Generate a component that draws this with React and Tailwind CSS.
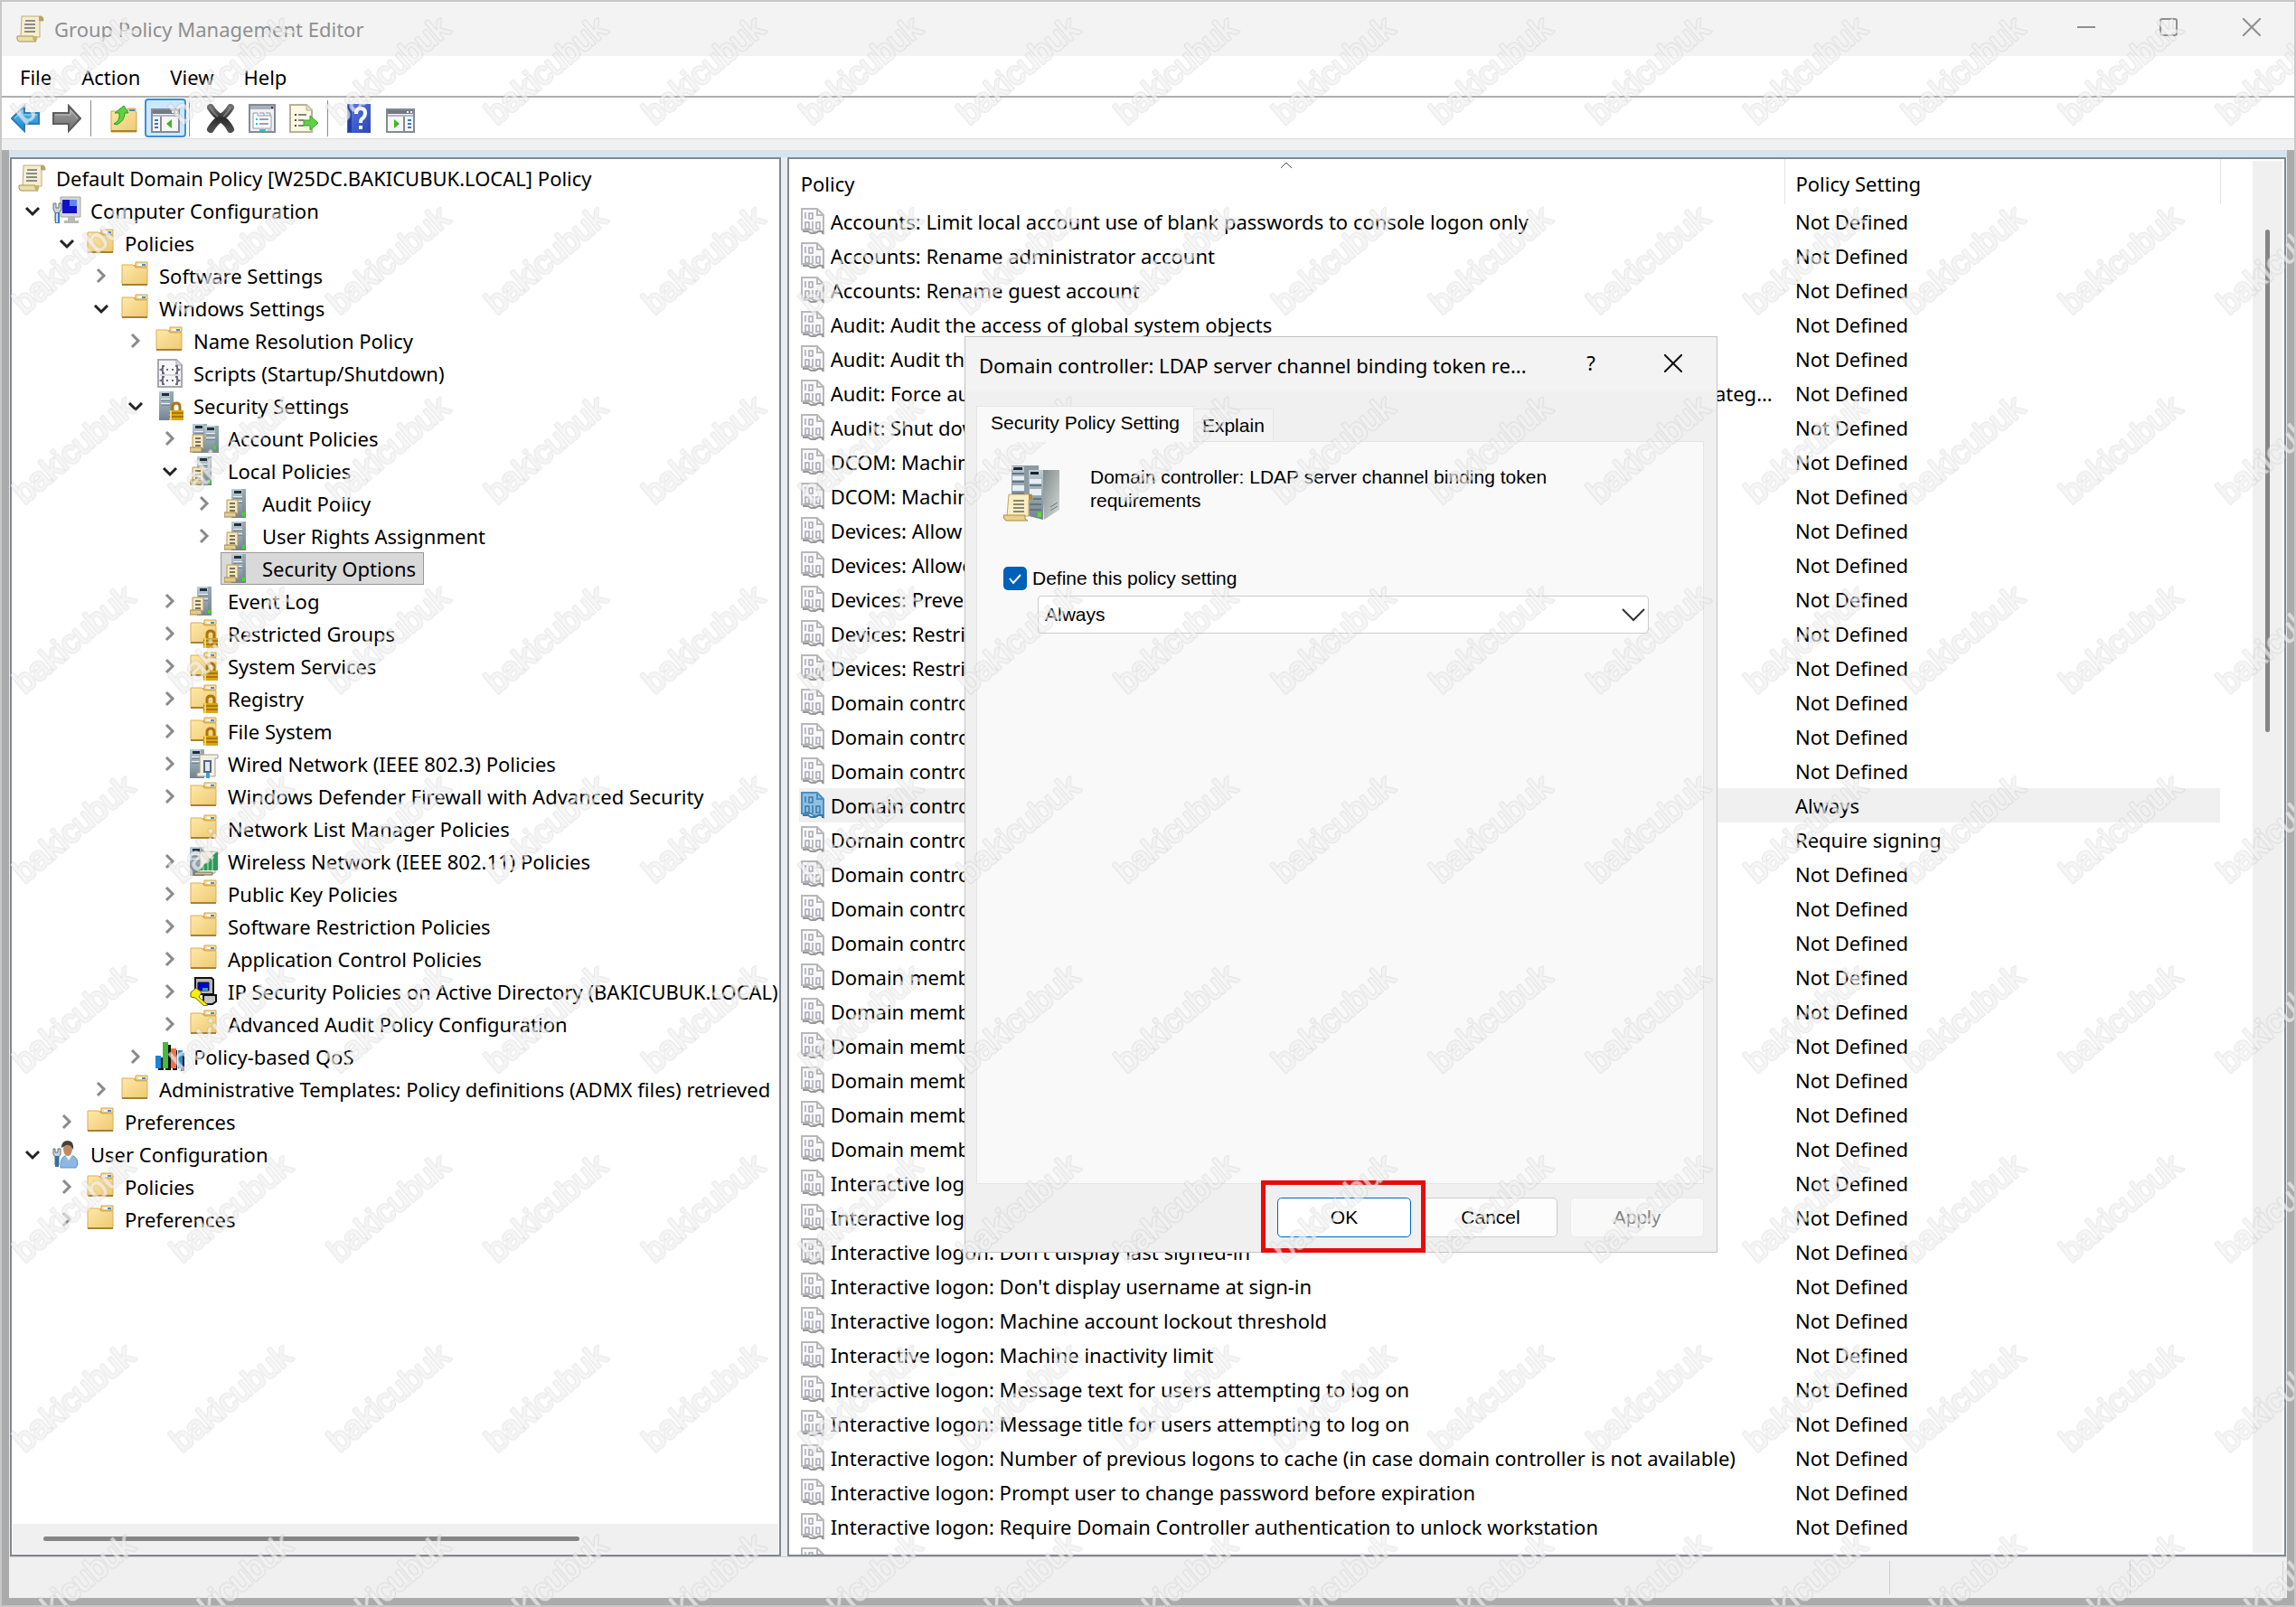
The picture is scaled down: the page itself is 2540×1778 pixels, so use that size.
const tree = [
    { level: 0, icon: 'scroll', label: 'Default Domain Policy [W25DC.BAKICUBUK.LOCAL] Policy' },
    { level: 1, icon: 'computer', label: 'Computer Configuration', state: 'open' },
    { level: 2, icon: 'folder', label: 'Policies', state: 'open' },
    { level: 3, icon: 'folder', label: 'Software Settings', state: 'closed' },
    { level: 3, icon: 'folder', label: 'Windows Settings', state: 'open' },
    { level: 4, icon: 'folder', label: 'Name Resolution Policy', state: 'closed' },
    { level: 4, icon: 'script', label: 'Scripts (Startup/Shutdown)' },
    { level: 4, icon: 'serverLock', label: 'Security Settings', state: 'open' },
    { level: 5, icon: 'servers', label: 'Account Policies', state: 'closed' },
    { level: 5, icon: 'server', label: 'Local Policies', state: 'open' },
    { level: 6, icon: 'server', label: 'Audit Policy', state: 'closed' },
    { level: 6, icon: 'server', label: 'User Rights Assignment', state: 'closed' },
    { level: 6, icon: 'server', label: 'Security Options', selected: true },
    { level: 5, icon: 'server', label: 'Event Log', state: 'closed' },
    { level: 5, icon: 'folderLock', label: 'Restricted Groups', state: 'closed' },
    { level: 5, icon: 'folderLock', label: 'System Services', state: 'closed' },
    { level: 5, icon: 'folderLock', label: 'Registry', state: 'closed' },
    { level: 5, icon: 'folderLock', label: 'File System', state: 'closed' },
    { level: 5, icon: 'wired', label: 'Wired Network (IEEE 802.3) Policies', state: 'closed' },
    { level: 5, icon: 'folder', label: 'Windows Defender Firewall with Advanced Security', state: 'closed' },
    { level: 5, icon: 'folder', label: 'Network List Manager Policies' },
    { level: 5, icon: 'wireless', label: 'Wireless Network (IEEE 802.11) Policies', state: 'closed' },
    { level: 5, icon: 'folder', label: 'Public Key Policies', state: 'closed' },
    { level: 5, icon: 'folder', label: 'Software Restriction Policies', state: 'closed' },
    { level: 5, icon: 'folder', label: 'Application Control Policies', state: 'closed' },
    { level: 5, icon: 'ipsec', label: 'IP Security Policies on Active Directory (BAKICUBUK.LOCAL)', state: 'closed' },
    { level: 5, icon: 'folder', label: 'Advanced Audit Policy Configuration', state: 'closed' },
    { level: 4, icon: 'qos', label: 'Policy-based QoS', state: 'closed' },
    { level: 3, icon: 'folder', label: 'Administrative Templates: Policy definitions (ADMX files) retrieved', state: 'closed' },
    { level: 2, icon: 'folder', label: 'Preferences', state: 'closed' },
    { level: 1, icon: 'user', label: 'User Configuration', state: 'open' },
    { level: 2, icon: 'folder', label: 'Policies', state: 'closed' },
    { level: 2, icon: 'folder', label: 'Preferences', state: 'closed' },
];

const policies = [
    ['Accounts: Limit local account use of blank passwords to console logon only'],
    ['Accounts: Rename administrator account'],
    ['Accounts: Rename guest account'],
    ['Audit: Audit the access of global system objects'],
    ['Audit: Audit the use of Backup and Restore privilege'],
    ['Audit: Force audit policy subcategory settings (Windows Vista or later) to override audit policy category settings'],
    ['Audit: Shut down system immediately if unable to log security audits'],
    ['DCOM: Machine Access Restrictions in Security Descriptor Definition Language'],
    ['DCOM: Machine Launch Restrictions in Security Descriptor Definition Language'],
    ['Devices: Allow undock without having to log on'],
    ['Devices: Allowed to format and eject removable media'],
    ['Devices: Prevent users from installing printer drivers'],
    ['Devices: Restrict CD-ROM access to locally logged-on user only'],
    ['Devices: Restrict floppy access to locally logged-on user only'],
    ['Domain controller: Allow computer account re-use during domain join'],
    ['Domain controller: Allow server operators to schedule tasks'],
    ['Domain controller: Allow vulnerable Netlogon secure channel connections'],
    ['Domain controller: LDAP server channel binding token requirements', 'Always'],
    ['Domain controller: LDAP server signing requirements', 'Require signing'],
    ['Domain controller: LDAP server signing requirements Enforcement'],
    ['Domain controller: Refuse machine account password changes'],
    ['Domain controller: Refuse setting default machine account password'],
    ['Domain member: Digitally encrypt or sign secure channel data (always)'],
    ['Domain member: Digitally encrypt secure channel data (when possible)'],
    ['Domain member: Digitally sign secure channel data (when possible)'],
    ['Domain member: Disable machine account password changes'],
    ['Domain member: Maximum machine account password age'],
    ['Domain member: Require strong session key'],
    ['Interactive logon: Display user information when the session is locked'],
    ['Interactive logon: Do not require CTRL+ALT+DEL'],
    ["Interactive logon: Don't display last signed-in"],
    ["Interactive logon: Don't display username at sign-in"],
    ['Interactive logon: Machine account lockout threshold'],
    ['Interactive logon: Machine inactivity limit'],
    ['Interactive logon: Message text for users attempting to log on'],
    ['Interactive logon: Message title for users attempting to log on'],
    ['Interactive logon: Number of previous logons to cache (in case domain controller is not available)'],
    ['Interactive logon: Prompt user to change password before expiration'],
    ['Interactive logon: Require Domain Controller authentication to unlock workstation'],
    ['Interactive logon: Require smart card'],
];

function Svg({ children, className = 'w-8 h-8' }) {
    return (
        <svg viewBox="0 0 32 32" className={`${className} shrink-0`} aria-hidden="true">
            {children}
        </svg>
    );
}

function Scroll() {
    return (
        <>
            <path d="M6 2h22q2 1 2 5h-4v18H5z" fill="#f6eecb" stroke="#b9ad82" />
            <path d="M25 2h3q3 2 2 5h-5z" fill="#b5a468" />
            <path d="M1 24h18v3q0 3 3 3H4q-3 0-3-3z" fill="#ecdfa6" stroke="#a39561" />
            <path d="M19 24h4q1 3-1 6h-3z" fill="#c6b36d" />
            <path d="M10 7h11M9 11h12M9 15h12M9 19h12" stroke="#8c8a93" strokeWidth="2" />
        </>
    );
}

function FolderShape() {
    return (
        <>
            <path d="M1 4h14l3-3h11v7H1z" fill="#e3b75d" />
            <path d="M16 1h13v5H16z" fill="#f7e3a6" stroke="#d1a24a" />
            <path d="M19 3h4v2h-4z" fill="#fff" />
            <path d="M23 3h4v2h-4z" fill="#3f8fe0" />
            <path d="M1 4h12l3 3h13v19H1z" fill="url(#folderFill)" stroke="#d9ae55" />
            <path d="M1 26h28" stroke="#a98036" strokeWidth="2" />
        </>
    );
}

function Lock() {
    return (
        <>
            <path d="M19 22v-5q0-4 4-4t4 4v5" fill="none" stroke="#a9750e" strokeWidth="3" />
            <rect x="15" y="21" width="16" height="11" fill="#dca516" />
            <path d="M15 24h16M15 28h16" stroke="#a9750e" strokeWidth="2" />
            <path d="M17 21v11" stroke="#f7d566" strokeWidth="2" />
        </>
    );
}

function Tower({ x = 0, y = 0 }) {
    return (
        <g transform={`translate(${x} ${y})`}>
            <path d="M0 0h16v32H0z" fill="url(#towerFill)" />
            <path d="M12 0h4v32h-4z" fill="#738591" opacity=".45" />
            <path d="M3 2h8v3H3z" fill="#1f2f3b" />
            <path d="M2 8h10v2H2zM2 13h10v2H2z" fill="#e9f2f7" />
            <path d="M2 10h10M2 15h10" stroke="#52636f" />
        </g>
    );
}

function MiniScroll() {
    return (
        <>
            <path d="M3 12h12v15H3z" fill="#f6e8bd" stroke="#b39b5e" />
            <path d="M0 26h13v5H0z" fill="#e3cd8b" stroke="#9c8650" />
            <path d="M6 16h6M6 20h6M6 24h6" stroke="#77715f" strokeWidth="2" />
        </>
    );
}

const icons = {
    scroll: <Scroll />,
    folder: <FolderShape />,
    folderLock: (
        <>
            <FolderShape />
            <Lock />
        </>
    ),
    script: (
        <>
            <path d="M3 1h20l6 6v24H3z" fill="#f7f7f9" stroke="#a7a7ad" strokeWidth="2" />
            <path d="M23 1v6h6" fill="#d9d9de" stroke="#a7a7ad" />
            <path d="M10 8H8v3l-2 1 2 1v3h2M22 8h2v3l2 1-2 1v3h-2M12 12h2M18 12h2M10 20H8v3l-2 1 2 1v3h2M22 20h2v3l2 1-2 1v3h-2M12 24h2M18 24h2" fill="none" stroke="#6a6780" strokeWidth="2" />
            <path d="M5 18h22" stroke="#b9b9c1" />
        </>
    ),
    server: (
        <>
            <Tower x={8} />
            <MiniScroll />
            <path d="M20 26h3v4h-3z" fill="#3be012" />
        </>
    ),
    servers: (
        <>
            <Tower x={3} />
            <Tower x={16} y={2} />
            <MiniScroll />
            <path d="M26 24h3v4h-3z" fill="#3be012" />
        </>
    ),
    serverLock: (
        <>
            <Tower x={4} />
            <Lock />
        </>
    ),
    wired: (
        <>
            <Tower />
            <path d="M11 6h20v4h-3v20H8v-4h3z" fill="#f3efe2" stroke="#a79f88" />
            <path d="M16 13h7v12h-7z" fill="#dfe7f5" stroke="#53668b" strokeWidth="2" />
            <path d="M18 26h4v6h-4z" fill="#3aa4c9" />
        </>
    ),
    wireless: (
        <>
            <Tower />
            <path d="M11 5h20v4h-3v20H8v-3h3z" fill="#f3efe2" stroke="#a79f88" />
            <path d="M31 4v22H9z" fill="#2c9a57" />
            <path d="M15 21v5M20 16v10M25 11v15" stroke="#c9ecd4" />
            <path d="M5 28h20v3H5z" fill="#d3c79c" stroke="#6c6553" />
        </>
    ),
    computer: (
        <>
            <path d="M9 1h22v22H9z" fill="#d5d5d2" stroke="#a5a5a2" />
            <path d="M11 4h16v15H11z" fill="#1010c8" />
            <path d="M19 4h8v7h-8z" fill="#5d86f4" />
            <path d="M17 23h8v4h4v3H13v-3h4z" fill="#b9bab8" />
            <path d="M1 8h3v5h3V8h3v7l-3 3v10H3V18l-2-3z" fill="#c9d3da" stroke="#63717b" />
            <path d="M3 18h5v12H3z" fill="#2f7fbd" />
            <path d="M5 19v10" stroke="#c8e6fa" strokeWidth="2" />
        </>
    ),
    user: (
        <>
            <path d="M9 31q-1-14 9-14t10 10l-2 4z" fill="#8db8e6" stroke="#5f8fc4" />
            <path d="M14 17l4 6 4-6z" fill="#f4f8fc" />
            <ellipse cx="17" cy="10" rx="5" ry="8" fill="#c08a61" />
            <path d="M10 9q0-8 7-8t6 10q-3-6-8-5z" fill="#45403b" />
            <path d="M1 10h2v4h3v-4h3v6l-2 3v9H3v-9l-2-3z" fill="#c9d3da" stroke="#63717b" />
            <path d="M3 18h4v12H3z" fill="#2f6fad" />
        </>
    ),
    ipsec: (
        <>
            <path d="M6 1h18l2 2v16H6z" fill="#b9b9b9" stroke="#111" strokeWidth="2" />
            <path d="M9 6h12v9H9z" fill="#0000d8" stroke="#111" />
            <path d="M14 12h6v3h-6z" fill="#2aa3c4" />
            <path d="M15 20h14v7l-4 3H15z" fill="#c4c4c4" stroke="#111" strokeWidth="2" />
            <path d="M1 17l6-5 6 5-3 5 10 9-4 1-10-9-5-1z" fill="#f7ee05" stroke="#6b6700" />
        </>
    ),
    qos: (
        <>
            <path d="M3 17h6v14H3zM11 3h6v28h-6zM19 9h5v22h-5zM28 12h4v20h-4z" fill="#111" />
            <path d="M0 15h6v14H0z" fill="#1785d6" />
            <path d="M8 0h6v29H8z" fill="#48b83c" />
            <path d="M17 7h6v22h-6z" fill="#ef7146" />
            <path d="M25 9h5v20h-5z" fill="#2a8bd0" />
        </>
    ),
    back: (
        <>
            <path d="M1 16L15 2v8h16v12H15v8z" fill="url(#blueArrow)" stroke="#2c7db5" strokeWidth="2" />
            <path d="M4 16l9-9v5h16" fill="none" stroke="#9edcfb" />
        </>
    ),
    forward: (
        <>
            <path d="M31 16L18 2v8H1v12h17v8z" fill="url(#grayArrow)" stroke="#5c5c5c" strokeWidth="2" />
            <path d="M3 12h17V7l8 9" fill="none" stroke="#c2c2c2" />
        </>
    ),
    up: (
        <>
            <path d="M2 8h18V5h9v4h1v22H2z" fill="url(#folderFill)" stroke="#d0a34a" />
            <path d="M22 6h6v2h-6z" fill="#3f8fe0" />
            <path d="M2 30h28" stroke="#a98036" strokeWidth="2" />
            <path d="M5 22q7-3 6-12H6l10-8 5 8h-4q0 9-9 13z" fill="#5bd33c" stroke="#2b9b1e" />
        </>
    ),
    panes: (
        <>
            <path d="M1 6h30v25H1z" fill="#f5f6f8" stroke="#858a93" strokeWidth="2" />
            <path d="M2 7h28v4H2z" fill="#737985" />
            <path d="M23 8h2v2h-2zM27 8h2v2h-2z" fill="#fff" />
            <path d="M2 13h28" stroke="#b3b7bf" strokeWidth="2" />
            <path d="M11 14v16" stroke="#858a93" strokeWidth="2" />
            <path d="M4 18h4M4 22h4M4 26h4" stroke="#3a76c8" strokeWidth="2" />
            <path d="M17 22l6-5v10z" fill="#41b51d" />
        </>
    ),
    panesRight: (
        <>
            <path d="M1 6h30v25H1z" fill="#f5f6f8" stroke="#858a93" strokeWidth="2" />
            <path d="M2 7h28v4H2z" fill="#737985" />
            <path d="M23 8h2v2h-2zM27 8h2v2h-2z" fill="#fff" />
            <path d="M2 13h28" stroke="#b3b7bf" strokeWidth="2" />
            <path d="M20 14v16" stroke="#858a93" strokeWidth="2" />
            <path d="M24 18h4M24 22h4M24 26h4" stroke="#3a76c8" strokeWidth="2" />
            <path d="M15 22l-6-5v10z" fill="#41b51d" />
        </>
    ),
    remove: (
        <>
            <path d="M5 4q5 8 11 11 6-3 11-11M5 28q5-8 11-12 7 4 11 12" fill="none" stroke="url(#crossFill)" strokeWidth="8" strokeLinecap="round" />
            <path d="M4 3q4 7 9 11M27 3q-3 7-8 11" fill="none" stroke="#9b9b9b" strokeWidth="2" opacity=".6" />
        </>
    ),
    properties: (
        <>
            <path d="M2 1h28v30H2z" fill="#f1f2f5" stroke="#858a99" strokeWidth="2" />
            <path d="M3 2h26v4H3z" fill="#aab0bb" />
            <path d="M26 3h2v2h-2z" fill="#333" />
            <path d="M6 10h5v3h15v14H6z" fill="#fff" stroke="#9298a6" />
            <path d="M13 10h5v3M20 10h5v3" fill="none" stroke="#9298a6" />
            <path d="M9 17h2M9 22h2" stroke="#19c4ea" strokeWidth="2" />
            <path d="M13 17h10M13 22h10" stroke="#9aa0ad" strokeWidth="2" />
            <path d="M13 28h7v2h-7z" fill="#19c8ee" />
            <path d="M22 28h5v2h-5z" fill="#c9ccd4" />
        </>
    ),
    exportList: (
        <>
            <path d="M1 1h18l6 6v24H1z" fill="#fcf8e4" stroke="#b7b195" strokeWidth="2" />
            <path d="M19 1v6h6" fill="#e7dfbd" stroke="#b7b195" />
            <path d="M6 12h2M6 18h2M6 24h2" stroke="#4b4b55" strokeWidth="2" />
            <path d="M10 12h9M10 18h6M10 24h6" stroke="#86868c" strokeWidth="2" />
            <path d="M16 18h7v-5l9 8-9 8v-5h-7z" fill="#62cf4a" stroke="#36a327" />
        </>
    ),
    help: (
        <>
            <path d="M3 0h26v32H3z" fill="url(#helpFill)" />
            <path d="M4 1h4v30H4z" fill="#1f3da1" />
            <path d="M13 11q0-6 5-6t5 5q0 4-3 6-2 1-2 5" fill="none" stroke="#fff" strokeWidth="4" />
            <path d="M16 24h4v4h-4z" fill="#fff" />
        </>
    ),
};

function PolicyIcon({ selected }) {
    const ink = selected ? '#3c79a8' : '#a6a6b6';
    const edge = selected ? '#4c8fbf' : '#b8b8b8';
    return (
        <svg viewBox="0 0 26 30" className="w-[26px] h-[30px] shrink-0" aria-hidden="true">
            <path d="M1 1h17l7 7v20l-4-3-3 2-4-1-3-2H1z" fill={selected ? '#8fc0e2' : '#f8f8fa'} stroke={edge} strokeWidth="2" />
            <path d="M18 1v7h7" fill="none" stroke={edge} strokeWidth="2" />
            <path d="M5 5v7M9 6h4v6H9zM5 16h4v7H5zM13 15v9M17 16h4v7h-4z" fill="none" stroke={ink} strokeWidth="1.5" />
            <path d="M2 26h6l3 2h5l3-2h5v3" fill="none" stroke={selected ? '#3c79a8' : '#999999'} strokeWidth="2" />
        </svg>
    );
}

function ServerBig() {
    return (
        <svg viewBox="0 0 62 62" className="w-[62px] h-[62px] shrink-0" aria-hidden="true">
            <path d="M9 0h30v48H9z" fill="#8d9aa2" />
            <path d="M10 1h13v44H10z" fill="url(#towerFill)" />
            <path d="M11 2h10v3H11z" fill="#17242c" />
            <path d="M10 12h13v4H10zM10 22h13v6H10z" fill="#e6f0f4" />
            <path d="M10 9h13M10 18h13M10 31h13" stroke="#65747e" strokeWidth="2" />
            <path d="M42 5h20v44L45 60z" fill="url(#sideFill)" />
            <path d="M28 5h16v55l-16-4z" fill="url(#towerFill)" />
            <path d="M30 7h9v3h-9z" fill="#17242c" />
            <path d="M29 15h13v5H29zM29 26h13v7H29z" fill="#e6f0f4" />
            <path d="M29 22h13M29 37h13M29 43h13M29 49h13" stroke="#65747e" strokeWidth="2" />
            <path d="M38 52h4v5h-4z" fill="#55e01c" />
            <path d="M52 46l8-5M52 50l8-5" stroke="#6b7477" />
            <path d="M6 32h25q2 2 1 6h-4v18H4z" fill="#fbeec2" stroke="#c0a76a" />
            <path d="M28 32h3q2 2 1 6h-4z" fill="#a98c3f" />
            <path d="M0 55h24v4l3 2H3q-3-1-3-6z" fill="#ecd08a" stroke="#a88b4b" />
            <path d="M11 39h12M11 43h12M11 47h12M11 51h12" stroke="#8a8577" strokeWidth="2" />
        </svg>
    );
}

function Chevron({ state }) {
    if (!state) return <span className="w-[38px] shrink-0" />;
    return (
        <button className="w-[38px] h-9 pl-[2px] shrink-0 flex items-center justify-center" aria-label={state === 'open' ? 'Collapse' : 'Expand'}>
            <svg viewBox="0 0 20 20" className="w-5 h-5" fill="none" strokeWidth="3" aria-hidden="true">
                {state === 'open' ? <path d="M3 7l7 7 7-7" stroke="#222" /> : <path d="M6 3l7 7-7 7" stroke="#8a8a8a" />}
            </svg>
        </button>
    );
}

function ToolButton({ icon, label, active }) {
    return (
        <button
            aria-label={label}
            className={`w-[46px] h-[43px] flex items-center justify-center ${active ? 'bg-[#cce8ff] border-2 border-[#3d8fd1] rounded' : ''}`}
        >
            <Svg>{icons[icon]}</Svg>
        </button>
    );
}

function Separator() {
    return <span className="w-px h-10 bg-[#8d8d8d] shrink-0" />;
}

function TreePane() {
    return (
        <nav className="min-w-0 bg-white border-2 border-[#828790] flex flex-col overflow-hidden">
            <ul className="flex-1 pt-[3px] pl-[3px] overflow-hidden">
                {tree.map((node, i) => (
                    <li key={i} className="h-9 flex items-center whitespace-nowrap" style={{ paddingLeft: Math.max(0, node.level - 1) * 38 }}>
                        {node.level > 0 && <Chevron state={node.state} />}
                        <button
                            className={`h-9 flex items-center gap-[10px] pr-2 ${node.selected ? 'bg-[#d9d9d9] border border-[#999999] pl-[3px]' : 'pl-1'}`}
                        >
                            <Svg>{icons[node.icon]}</Svg>
                            {node.label}
                        </button>
                    </li>
                ))}
            </ul>
            <div className="h-[33px] m-px bg-[#f0f0f0] flex items-center pl-[34px]">
                <div className="w-[73%] h-[5px] rounded-full bg-[#858585]" />
            </div>
        </nav>
    );
}

function PolicyPane() {
    return (
        <section className="min-w-0 bg-white border-2 border-[#828790] flex overflow-hidden">
            <div className="flex-1 min-w-0 overflow-hidden">
                <table className="w-full table-fixed border-collapse text-left">
                    <colgroup>
                        <col />
                        <col className="w-[482px]" />
                        <col className="w-[36px]" />
                    </colgroup>
                    <thead>
                        <tr className="h-[50px]">
                            <th className="relative font-normal pl-[13px] pt-1 border-r border-[#e5e5e5]">
                                <svg viewBox="0 0 14 8" className="absolute left-1/2 top-[3px] -translate-x-1/2 w-[14px] h-2" fill="none" stroke="#555" aria-hidden="true">
                                    <path d="M1 7l6-6 6 6" />
                                </svg>
                                Policy
                            </th>
                            <th className="font-normal pl-3 pt-1 border-r border-[#e5e5e5]">Policy Setting</th>
                            <th />
                        </tr>
                    </thead>
                    <tbody>
                        {policies.map(([name, setting], i) => {
                            const selected = setting === 'Always';
                            return (
                                <tr key={i} className="h-[38px]">
                                    <td className="p-0">
                                        <div className={`ml-[11px] h-[38px] pl-[2px] pr-[10px] flex items-center gap-[7px] ${selected ? 'bg-[#f0f0f0]' : ''}`}>
                                            <PolicyIcon selected={selected} />
                                            <span className="truncate">{name}</span>
                                        </div>
                                    </td>
                                    <td className={`p-0 pl-3 ${selected ? 'bg-[#f0f0f0]' : ''}`}>{setting || 'Not Defined'}</td>
                                    <td />
                                </tr>
                            );
                        })}
                    </tbody>
                </table>
            </div>
            <div className="w-[33px] my-[2px] mr-[2px] bg-[#f0f0f0] flex justify-center pt-[76px]">
                <div className="w-[5px] h-[38%] rounded-full bg-[#858585]" />
            </div>
        </section>
    );
}

function PolicyDialog() {
    return (
        <div
            role="dialog"
            aria-labelledby="dialog-title"
            className="absolute left-[1065px] top-[370px] w-[833px] h-[1014px] bg-[#f0f0f0] border border-[#c3c3c3] flex flex-col"
        >
            <div className="h-[60px] bg-[#f3f3f3] flex items-center pl-[15px]">
                <h2 id="dialog-title" className="flex-1 whitespace-nowrap pt-[2px]">
                    Domain controller: LDAP server channel binding token re...
                </h2>
                <button className="w-[86px] h-full pb-1" aria-label="Help">?</button>
                <button className="w-24 h-full pb-[2px] flex items-center justify-center" aria-label="Close">
                    <svg viewBox="0 0 20 20" className="w-5 h-5" stroke="#111" strokeWidth="2" aria-hidden="true">
                        <path d="M0 0l20 20M20 0L0 20" />
                    </svg>
                </button>
            </div>
            <div className="flex-1 flex flex-col pl-3 pr-[14px] pt-4 pb-4 font-['Liberation_Sans',sans-serif] text-[21px] leading-[26px]">
                <div role="tablist" className="flex items-end">
                    <button role="tab" aria-selected="true" className="h-10 px-[15px] pb-1 bg-[#f9f9f9] border border-b-0 border-[#e5e5e5] -mb-px z-10 whitespace-nowrap">
                        Security Policy Setting
                    </button>
                    <button role="tab" aria-selected="false" className="h-9 px-[9px] bg-[#f3f3f3] border border-l-0 border-b-0 border-[#e5e5e5]">
                        Explain
                    </button>
                </div>
                <div role="tabpanel" className="flex-1 bg-[#f9f9f9] border border-[#e5e5e5] pt-[26px] pl-[29px] pr-[60px]">
                    <div className="flex gap-[34px]">
                        <ServerBig />
                        <p className="w-[560px]">Domain controller: LDAP server channel binding token requirements</p>
                    </div>
                    <label className="mt-[50px] flex items-center gap-[6px]">
                        <span className="grid h-[26px] w-[26px]">
                            <input type="checkbox" defaultChecked className="col-start-1 row-start-1 appearance-none bg-[#005fb8] rounded-[5px]" />
                            <svg viewBox="0 0 26 26" className="col-start-1 row-start-1 pointer-events-none" fill="none" stroke="#fff" strokeWidth="2" aria-hidden="true">
                                <path d="M7 13l4 5 8-9" />
                            </svg>
                        </span>
                        Define this policy setting
                    </label>
                    <div className="mt-[6px] ml-[38px] grid">
                        <select aria-label="Policy setting" className="col-start-1 row-start-1 appearance-none h-[42px] pl-[7px] bg-white border border-[#cccccc] rounded-sm">
                            <option>Always</option>
                        </select>
                        <svg viewBox="0 0 26 16" className="col-start-1 row-start-1 justify-self-end self-center mr-1 w-[26px] h-4 pointer-events-none" fill="none" stroke="#333" strokeWidth="2" aria-hidden="true">
                            <path d="M1 2l12 12L25 2" />
                        </svg>
                    </div>
                </div>
                <div className="mt-[15px] flex justify-end gap-[14px]">
                    <span className="relative">
                        <button className="w-[148px] h-11 bg-white border border-[#0067c0] rounded-[5px]">OK</button>
                        <span className="absolute -left-[18px] -right-4 -top-[19px] -bottom-[17px] border-[5px] border-[#e60c0c] pointer-events-none" />
                    </span>
                    <button className="w-[148px] h-11 bg-[#fdfdfd] border border-[#cccccc] rounded-[5px]">Cancel</button>
                    <button disabled className="w-[148px] h-11 bg-[#f9f9f9] border border-[#ebebeb] rounded-[5px] text-[#838383]">Apply</button>
                </div>
            </div>
        </div>
    );
}

function Watermark() {
    return (
        <svg className="absolute inset-0 w-full h-full pointer-events-none" aria-hidden="true">
            <defs>
                <pattern id="mark" x="-3" y="-2" width="174.2" height="209.8" patternUnits="userSpaceOnUse">
                    <g transform="translate(28 139) rotate(-40)" fontSize="36" fontFamily="Liberation Sans, sans-serif" strokeLinejoin="round">
                        <text fill="none" stroke="#808080" strokeOpacity=".2" strokeWidth="3">bakicubuk</text>
                        <text fill="#ffffff" stroke="#ffffff" strokeWidth="1" opacity=".6">bakicubuk</text>
                    </g>
                </pattern>
            </defs>
            <rect width="100%" height="100%" fill="url(#mark)" />
        </svg>
    );
}

function Gradients() {
    return (
        <svg className="absolute w-0 h-0" aria-hidden="true">
            <defs>
                <linearGradient id="folderFill" x1="0" y1="0" x2="1" y2="1">
                    <stop offset="0" stopColor="#ffe9a8" />
                    <stop offset="1" stopColor="#eec973" />
                </linearGradient>
                <linearGradient id="towerFill" x1="0" y1="0" x2="0" y2="1">
                    <stop offset="0" stopColor="#bccbd4" />
                    <stop offset="1" stopColor="#71838f" />
                </linearGradient>
                <linearGradient id="sideFill" x1="0" y1="0" x2="1" y2="1">
                    <stop offset="0" stopColor="#7c8686" />
                    <stop offset="1" stopColor="#d4dada" />
                </linearGradient>
                <linearGradient id="blueArrow" x1="0" y1="0" x2="0" y2="1">
                    <stop offset="0" stopColor="#63c3f2" />
                    <stop offset="1" stopColor="#1387d3" />
                </linearGradient>
                <linearGradient id="grayArrow" x1="0" y1="0" x2="0" y2="1">
                    <stop offset="0" stopColor="#a3a3a3" />
                    <stop offset="1" stopColor="#6e6e6e" />
                </linearGradient>
                <linearGradient id="crossFill" x1="0" y1="0" x2="0" y2="1">
                    <stop offset="0" stopColor="#6d6d6d" />
                    <stop offset=".5" stopColor="#2a2a2a" />
                    <stop offset="1" stopColor="#4d4d4d" />
                </linearGradient>
                <linearGradient id="helpFill" x1="0" y1="0" x2="1" y2="1">
                    <stop offset="0" stopColor="#5a7ae2" />
                    <stop offset="1" stopColor="#2a46b4" />
                </linearGradient>
            </defs>
        </svg>
    );
}

export default function App() {
    return (
        <div className="relative h-screen flex flex-col overflow-hidden border-2 border-[#c8c8c8] bg-[#f0f0f0] text-black font-['Noto_Sans','Open_Sans',sans-serif] text-[22px] leading-[30px]">
            <Gradients />
            <header className="h-[60px] bg-[#f3f3f3] flex items-center pl-4 text-[#8f8f8f]">
                <Svg>{icons.scroll}</Svg>
                <h1 className="flex-1 pl-[10px]">Group Policy Management Editor</h1>
                <button className="w-[91px] h-full pb-1 flex items-center justify-center" aria-label="Minimize">
                    <span className="w-5 h-[2px] bg-[#8f8f8f]" />
                </button>
                <button className="w-[91px] h-full pb-1 flex items-center justify-center" aria-label="Maximize">
                    <span className="w-5 h-5 border-2 border-[#8f8f8f] rounded-[3px]" />
                </button>
                <button className="w-[94px] h-full pb-1 flex items-center justify-center" aria-label="Close">
                    <svg viewBox="0 0 20 20" className="w-5 h-5" stroke="#8f8f8f" strokeWidth="2" aria-hidden="true">
                        <path d="M0 0l20 20M20 0L0 20" />
                    </svg>
                </button>
            </header>
            <div role="menubar" className="h-[46px] bg-white border-b-2 border-[#b0b0b0] flex items-center gap-[33px] pl-5 pt-[2px]">
                <button role="menuitem">File</button>
                <button role="menuitem">Action</button>
                <button role="menuitem">View</button>
                <button role="menuitem">Help</button>
            </div>
            <div role="toolbar" className="h-[46px] bg-white border-b border-[#dcdcdc] flex items-center pl-[3px]">
                <ToolButton icon="back" label="Back" />
                <ToolButton icon="forward" label="Forward" />
                <span className="w-[3px]" />
                <Separator />
                <span className="w-[13px]" />
                <ToolButton icon="up" label="Up One Level" />
                <ToolButton icon="panes" label="Show/Hide Console Tree" active />
                <span className="w-[3px]" />
                <Separator />
                <span className="w-[11px]" />
                <ToolButton icon="remove" label="Delete" />
                <ToolButton icon="properties" label="Properties" />
                <ToolButton icon="exportList" label="Export List" />
                <span className="w-[3px]" />
                <Separator />
                <span className="w-[11px]" />
                <ToolButton icon="help" label="Help" />
                <ToolButton icon="panesRight" label="Show/Hide Action Pane" />
            </div>
            <div className="h-3" />
            <main className="flex-1 min-h-0 flex flex-col bg-[#ababab] px-2 pb-2">
                <div className="h-2 bg-[#d6e4ef]" />
                <div className="flex-1 min-h-0 grid grid-cols-[853fr_1659fr] grid-rows-[minmax(0,1fr)] gap-[7px] px-px bg-[#e9edf2]">
                    <TreePane />
                    <PolicyPane />
                </div>
                <footer className="h-[46px] bg-[#f0f0f0] border-t border-[#c9cdd2] py-1 flex justify-end">
                    <span className="w-[266px] border-l border-[#d0d0d0]" />
                    <span className="w-[170px] mr-1 border-x border-[#d0d0d0]" />
                </footer>
            </main>
            <PolicyDialog />
            <Watermark />
        </div>
    );
}
